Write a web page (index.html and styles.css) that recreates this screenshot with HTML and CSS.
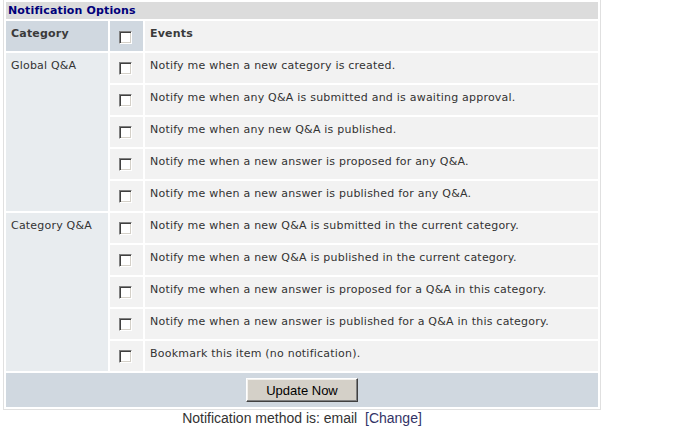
FILE: index.html
```html
<!DOCTYPE html>
<html>
<head>
<meta charset="utf-8">
<link rel="stylesheet" href="styles.css">
</head>
<body>
<div class="outer">
  <table class="opts">
    <tr class="title-row"><td colspan="3" class="title">Notification Options</td></tr>
    <tr class="head-row">
      <td class="head cat">Category</td>
      <td class="head chk"><span class="cb"></span></td>
      <td class="head ev">Events</td>
    </tr>
    <tr class="row">
      <td class="cat-cell" rowspan="5">Global Q&amp;A</td>
      <td class="chk"><span class="cb"></span></td>
      <td class="ev">Notify me when a new category is created.</td>
    </tr>
    <tr class="row">
      <td class="chk"><span class="cb"></span></td>
      <td class="ev">Notify me when any Q&amp;A is submitted and is awaiting approval.</td>
    </tr>
    <tr class="row">
      <td class="chk"><span class="cb"></span></td>
      <td class="ev">Notify me when any new Q&amp;A is published.</td>
    </tr>
    <tr class="row">
      <td class="chk"><span class="cb"></span></td>
      <td class="ev">Notify me when a new answer is proposed for any Q&amp;A.</td>
    </tr>
    <tr class="row">
      <td class="chk"><span class="cb"></span></td>
      <td class="ev">Notify me when a new answer is published for any Q&amp;A.</td>
    </tr>
    <tr class="row">
      <td class="cat-cell" rowspan="5">Category Q&amp;A</td>
      <td class="chk"><span class="cb"></span></td>
      <td class="ev">Notify me when a new Q&amp;A is submitted in the current category.</td>
    </tr>
    <tr class="row">
      <td class="chk"><span class="cb"></span></td>
      <td class="ev">Notify me when a new Q&amp;A is published in the current category.</td>
    </tr>
    <tr class="row">
      <td class="chk"><span class="cb"></span></td>
      <td class="ev">Notify me when a new answer is proposed for a Q&amp;A in this category.</td>
    </tr>
    <tr class="row">
      <td class="chk"><span class="cb"></span></td>
      <td class="ev">Notify me when a new answer is published for a Q&amp;A in this category.</td>
    </tr>
    <tr class="row">
      <td class="chk"><span class="cb"></span></td>
      <td class="ev">Bookmark this item (no notification).</td>
    </tr>
    <tr class="foot-row">
      <td colspan="3" class="foot"><button class="btn" type="button">Update Now</button></td>
    </tr>
  </table>
</div>
<div class="method">Notification method is: email&nbsp;&nbsp;<a class="change" href="#">[Change]</a></div>
</body>
</html>
```
FILE: styles.css
```css
html, body {
  margin: 0;
  padding: 0;
  background: #ffffff;
}
body {
  font-family: "DejaVu Sans", Verdana, sans-serif;
  font-size: 11px;
  color: #333333;
}
.outer {
  margin-left: 3px;
  width: 598px;
  box-sizing: border-box;
  border: 1px solid #e0e0e0;
  border-top: 0;
}
.opts {
  width: 100%;
  border-collapse: separate;
  border-spacing: 2px;
}
.opts td {
  padding: 0;
  vertical-align: top;
}
.title-row { height: 17px; }
.title {
  background: #dcdcdc;
  color: #00007a;
  font-weight: bold;
  letter-spacing: 0.15px;
  padding: 1px 2px 0 !important;
  line-height: 15px;
}
.head-row { height: 30px; }
.head {
  background: #d0d8e0;
}
.head.cat, .head.ev {
  font-weight: bold;
  color: #3a3a3a;
  letter-spacing: 0.2px;
  padding: 6px 5px 0 !important;
  line-height: 14px;
}
.row { height: 30px; }
.cat {
  width: 92px;
}
.cat-cell {
  background: #e8ecef;
  padding: 6px 5px 0 !important;
  line-height: 14px;
  letter-spacing: 0.2px;
  width: 92px;
}
.chk {
  width: 33px;
  background: #f2f2f2;
  padding: 9px 0 0 9px !important;
  box-sizing: border-box;
}
.head.chk { background: #d0d8e0; padding-top: 10px !important; }
.ev {
  background: #f2f2f2;
  padding: 6px 5px 0 !important;
  line-height: 14px;
  letter-spacing: 0.22px;
}
.cb {
  display: block;
  width: 11px;
  height: 11px;
  border: 1px solid;
  border-color: #808080 #ffffff #ffffff #808080;
  box-shadow: inset 1px 1px 0 #404040, inset -1px -1px 0 #d4d0c8;
  background: #ffffff;
}
.foot-row { height: 34px; }
.foot {
  background: #d0d8e0;
  text-align: center;
  vertical-align: middle !important;
}
.btn {
  font-family: "Liberation Sans", Arial, sans-serif;
  font-size: 13px;
  color: #000000;
  width: 112px;
  height: 24px;
  padding: 0;
  margin: 0;
  background: #d4d0c8;
  border: 1px solid;
  border-color: #ffffff #404040 #404040 #ffffff;
  box-shadow: inset -1px -1px 0 #808080, inset 1px 1px 0 #f4f2ee;
  vertical-align: middle;
}
.method {
  width: 598px;
  margin-left: 3px;
  text-align: center;
  font-family: "Liberation Sans", Arial, sans-serif;
  font-size: 14px;
  color: #333333;
  margin-top: 0;
  line-height: 16px;
}
.change {
  color: #333366;
  text-decoration: none;
}
```
